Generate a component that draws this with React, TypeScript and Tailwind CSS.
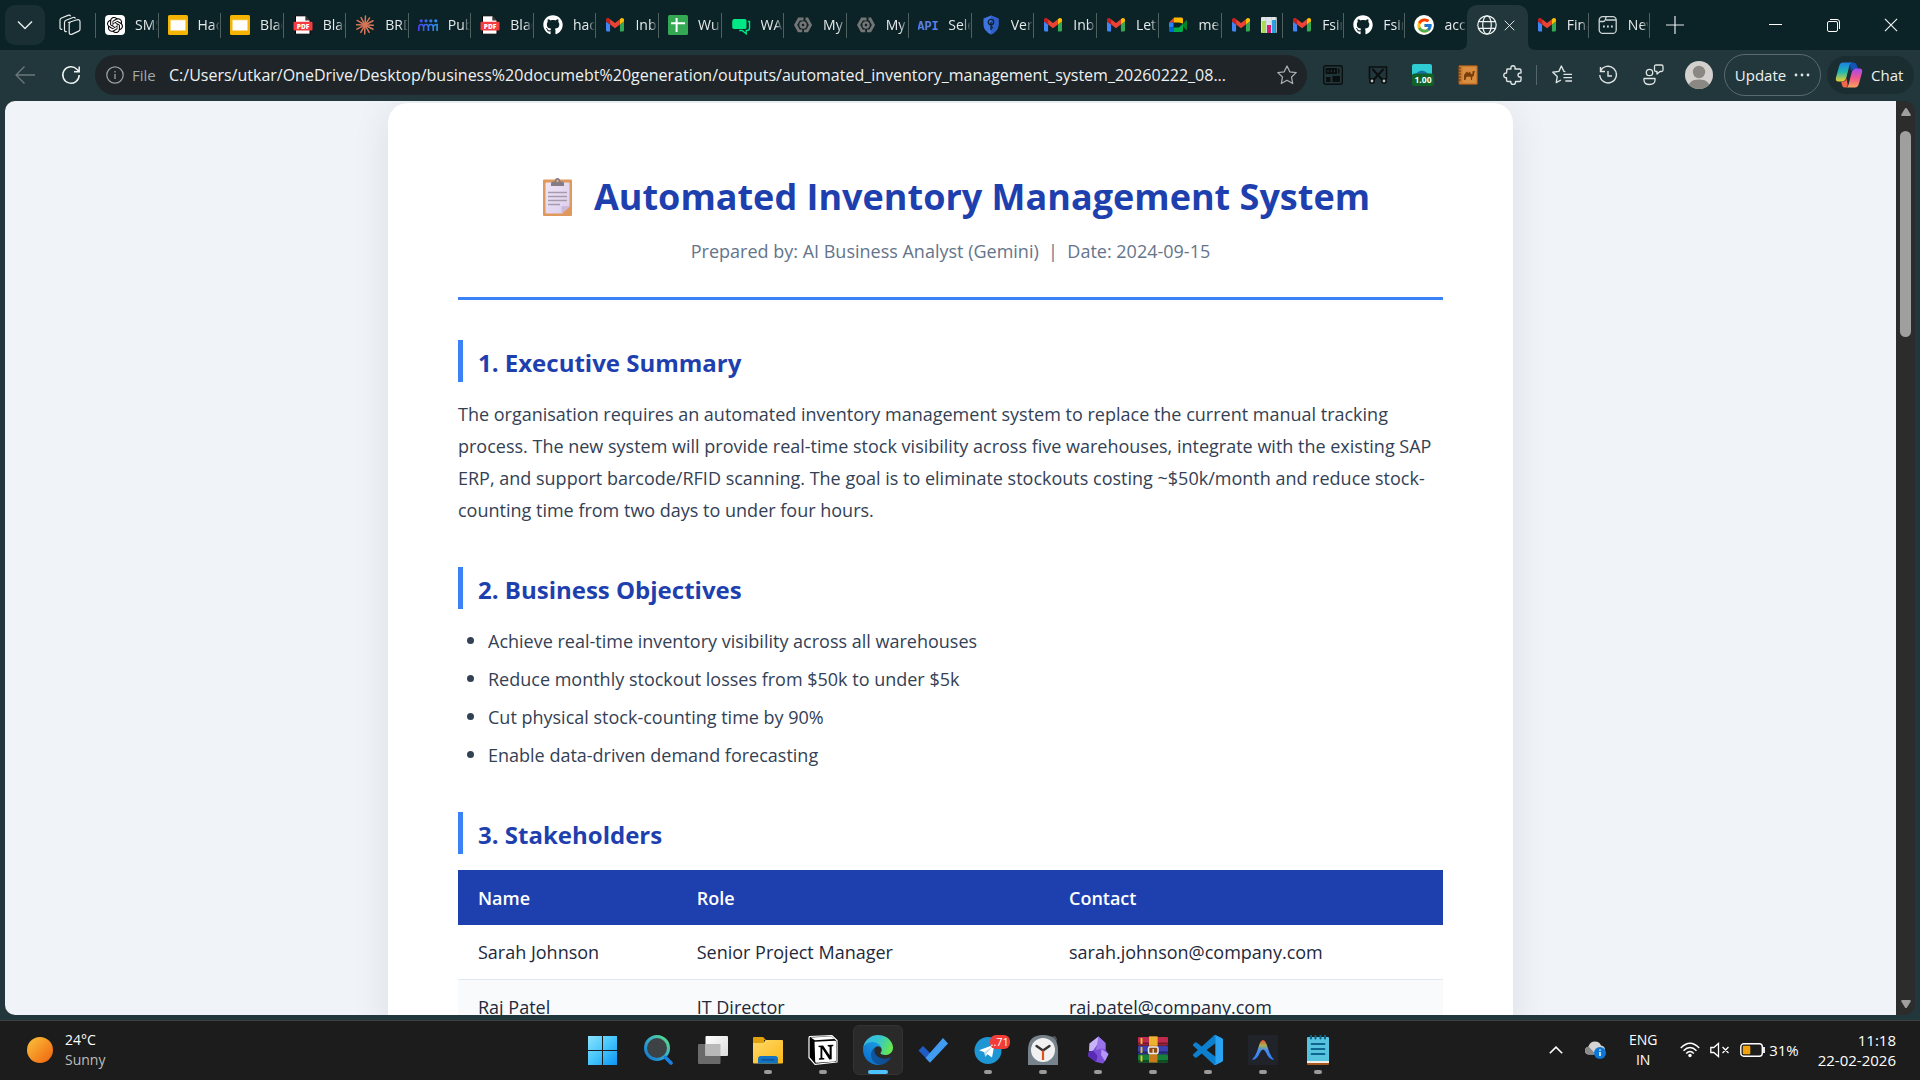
import type { ReactNode } from "react";
import { FaGithub } from "react-icons/fa";
import { FcGoogle } from "react-icons/fc";
import { SiOpenai } from "react-icons/si";

/* ---------- favicons ---------- */

const OpenAiIcon = () => (
  <span className="flex size-5 items-center justify-center rounded bg-white text-black">
    <SiOpenai size={16} />
  </span>
);

const SlidesIcon = () => (
  <svg viewBox="0 0 20 20" className="size-5">
    <rect width="20" height="20" rx="1.5" fill="#f4b400" />
    <rect x="2.5" y="5" width="15" height="10.5" fill="#fff" stroke="#f9d67a" strokeWidth="0.8" />
  </svg>
);

const PdfIcon = () => (
  <svg viewBox="0 0 20 20" className="size-5">
    <path d="M2.5 0.8h10l4.5 4.4v14h-14.5z" fill="#fff" stroke="#000" strokeWidth="1" />
    <path d="M12.3 0.8v4.6h4.7z" fill="#333" />
    <rect x="0.5" y="6.8" width="19" height="8.6" rx="1" fill="#f43b3f" />
    <text x="10" y="13.6" fontSize="6.6" fontWeight="800" textAnchor="middle" fill="#fff" fontFamily="Open Sans, sans-serif">PDF</text>
  </svg>
);

const ClaudeIcon = () => (
  <svg viewBox="0 0 20 20" className="size-5" stroke="#d97757" strokeWidth="1.5" strokeLinecap="round">
    {[3, 33, 62, 92, 118, 150, 182, 210, 243, 272, 300, 332].map((a, i) => (
      <path key={a} d={i % 2 ? "M10 9V1.6" : "M10 9V0.9"} transform={`rotate(${a} 10 10)`} />
    ))}
  </svg>
);

const PeopleRowIcon = () => (
  <svg viewBox="0 0 20 20" className="size-5" fill="none" strokeWidth="1.6">
    <defs>
      <linearGradient id="crowd" gradientUnits="userSpaceOnUse" x1="0" y1="0" x2="20" y2="0">
        <stop offset="0" stopColor="#4a45f0" />
        <stop offset="1" stopColor="#2797e8" />
      </linearGradient>
    </defs>
    <g stroke="url(#crowd)">
      <path d="M.8 16v-3.500q0-3 2.400-3t2.400 3V16M5.600 12.500q0-3 2.400-3t2.400 3V16M10.400 12.500q0-3 2.400-3t2.400 3V16M15.200 12.500q0-3 3.900-3V16" />
    </g>
    <g fill="url(#crowd)">
      <circle cx="3.200" cy="5.800" r="1.600" />
      <circle cx="8" cy="5.800" r="1.600" />
      <circle cx="12.800" cy="5.800" r="1.600" />
      <circle cx="17.800" cy="5.800" r="1.600" />
    </g>
  </svg>
);

const GithubIcon = () => <FaGithub size={20} color="#fff" />;

const GmailIcon = () => (
  <svg viewBox="52 42 88 66" className="w-[18px]">
    <path fill="#4285f4" d="M58 108h14V74L52 59v43c0 3.32 2.69 6 6 6" />
    <path fill="#34a853" d="M120 108h14c3.32 0 6-2.69 6-6V59l-20 15" />
    <path fill="#fbbc04" d="M120 48v26l20-15v-8c0-7.42-8.47-11.65-14.4-7.2" />
    <path fill="#ea4335" d="M72 74V48l24 18 24-18v26L96 92" />
    <path fill="#c5221f" d="M52 51v8l20 15V48l-5.6-4.2c-5.94-4.45-14.4-.22-14.4 7.2" />
  </svg>
);

const SheetsIcon = () => (
  <svg viewBox="0 0 20 20" className="size-5">
    <rect width="20" height="20" rx="1.5" fill="#34a853" />
    <path d="M8.6 3v14M3 8.2h14" stroke="#fff" strokeWidth="2" />
  </svg>
);

const ChatBubblesIcon = () => (
  <svg viewBox="0 0 20 20" className="size-5">
    <path d="M3 4h11q1.5 0 1.5 1.500v7q0 1.500-1.500 1.500h-11q-1.800 0-1.800-1.800v-5.400q0-2.800 1.800-2.800z" fill="#00e785" />
    <path d="M16.800 6.500h1.700v6.500q0 2.500-2.500 2.500h-.8v3.300l-4-3.300h-3" fill="none" stroke="#00e785" strokeWidth="1.400" />
  </svg>
);

const CloudHexIcon = () => (
  <svg viewBox="0 0 20 20" className="size-5" fill="none" stroke="#757575" strokeWidth="2.800">
    <path d="M10.500 4H6L2.600 10l3.200 5.800h3.400" />
    <path d="M12.500 4H14.200l3.300 6-3.300 5.800h-3.200" />
    <circle cx="10" cy="10" r="2.500" strokeWidth="2.400" />
  </svg>
);

const ApiIcon = () => (
  <svg viewBox="0 0 20 20" className="size-5">
    <text x="10" y="14.500" fontSize="12" fontWeight="700" textAnchor="middle" fill="#5a7fe0" fontFamily="Liberation Mono, monospace">API</text>
  </svg>
);

const ShieldIcon = () => (
  <svg viewBox="0 0 20 20" className="size-5">
    <path d="M10 .6 17.500 3.600v6.200q0 6-7.500 9.800Q2.500 15.800 2.500 9.800V3.600z" fill="#3f74e0" />
    <path d="M10 .6 17.500 3.600v6.200q0 6-7.500 9.800z" fill="#2f5fc8" />
    <circle cx="10" cy="7" r="2.700" fill="none" stroke="#0c2233" strokeWidth="1.300" />
    <path d="M10 7v8M10 12.500h2" stroke="#0c2233" strokeWidth="1.300" />
  </svg>
);

const MeetIcon = () => (
  <svg viewBox="0 0 20 20" className="size-5">
    <path d="M6 2.500 1 7.500h5z" fill="#ea4335" />
    <path d="M1 7.500h4.500v5H1z" fill="#2684fc" />
    <path d="M1 12.500h4.500V17H2.500Q1 17 1 15.500z" fill="#0066da" />
    <path d="M6 2.500h7.500q1.500 0 1.500 1.500v4.500l-4-1H6z" fill="#ffba00" />
    <path d="M5.500 12.500H11l4-4v7q0 1.500-1.500 1.500h-8z" fill="#00ac47" />
    <path d="m14 10 4-4.600q1-.6 1 .5v8.500q0 .9-1 .3z" fill="#00832d" />
  </svg>
);

const BarsIcon = () => (
  <svg viewBox="0 0 16 16" className="size-4">
    <rect width="16" height="16" rx="1" fill="#dfe6e8" />
    <path d="M0 5h16M0 10h16M5 0v16M10.500 0v16" stroke="#b8c5c9" strokeWidth=".5" />
    <rect x="1" y="4" width="4" height="12" fill="#a9d957" />
    <rect x="6" y="8" width="4" height="8" fill="#d81b72" />
    <rect x="11" y="3" width="4" height="13" fill="#2f9fe0" />
  </svg>
);

const GoogleIcon = () => (
  <span className="flex size-5 items-center justify-center rounded-full bg-white">
    <FcGoogle size={17} />
  </span>
);

const NewTabIcon = () => (
  <svg viewBox="0 0 20 20" className="size-5" fill="none" stroke="#cfd6d8" strokeWidth="1.300">
    <rect x="1.200" y="1.600" width="17" height="16.800" rx="3.500" />
    <path d="M1.200 6.500h4q1.500 0 2-1.500l1-3.400M8 5h10" />
    <path d="M5 11.500h1.800M9 11.500h1.800M13 11.500h1.800" strokeWidth="1.800" />
  </svg>
);

const GlobeIcon = () => (
  <svg viewBox="0 0 20 20" className="size-5 shrink-0" fill="none" stroke="#f0f3f4" strokeWidth="1.200">
    <circle cx="10" cy="10" r="9.200" />
    <ellipse cx="10" cy="10" rx="4.300" ry="9.200" />
    <path d="M1.500 6.700h17M1.500 13.300h17" />
  </svg>
);

const CloseGlyph = ({ className }: { className: string }) => (
  <svg viewBox="0 0 12 12" className={className} stroke="#f0f3f4" fill="none">
    <path d="m.8.8 10.400 10.400M11.200.8.8 11.200" />
  </svg>
);

type TabInfo = { icon: ReactNode; label: ReactNode; name: string };

const leftTabs: TabInfo[] = [
  { icon: <OpenAiIcon />, label: "SMS", name: "SMS" },
  { icon: <SlidesIcon />, label: "Hac", name: "Hac" },
  { icon: <SlidesIcon />, label: "Blac", name: "Blac" },
  { icon: <PdfIcon />, label: "Blac", name: "Blac" },
  { icon: <ClaudeIcon />, label: "BRD", name: "BRD" },
  { icon: <PeopleRowIcon />, label: "Pub", name: "Pub" },
  { icon: <PdfIcon />, label: "Blac", name: "Blac" },
  { icon: <GithubIcon />, label: "hac", name: "hac" },
  { icon: <GmailIcon />, label: "Inb", name: "Inbox" },
  { icon: <SheetsIcon />, label: "Wu", name: "Wu" },
  { icon: <ChatBubblesIcon />, label: "WA", name: "WA" },
  { icon: <CloudHexIcon />, label: "My", name: "My" },
  { icon: <CloudHexIcon />, label: "My", name: "My" },
  { icon: <ApiIcon />, label: "Sele", name: "Sele" },
  { icon: <ShieldIcon />, label: "Ver", name: "Ver" },
  { icon: <GmailIcon />, label: "Inb", name: "Inbox" },
  { icon: <GmailIcon />, label: "Let'", name: "Let's" },
  { icon: <MeetIcon />, label: "mee", name: "Meet" },
];

const midTabs: TabInfo[] = [
  { icon: <GmailIcon />, label: <BarsIcon />, name: "Mail" },
  { icon: <GmailIcon />, label: "Fsin", name: "Fsin" },
  { icon: <GithubIcon />, label: "Fsin", name: "Fsin" },
  { icon: <GoogleIcon />, label: "acc", name: "acc" },
];

const endTabs: TabInfo[] = [
  { icon: <GmailIcon />, label: "Fina", name: "Fina" },
  { icon: <NewTabIcon />, label: "New", name: "New tab" },
];

const Tab = ({ tab, last }: { tab: TabInfo; last?: boolean }) => (
  <button
    aria-label={tab.name}
    className={
      last
        ? "flex h-[25px] min-w-0 items-center gap-2.5 overflow-hidden pl-[9px]"
        : "flex h-[25px] min-w-0 items-center gap-2.5 overflow-hidden border-r border-[#50605f] pl-[9px]"
    }
  >
    <span className="flex w-5 shrink-0 items-center justify-center">{tab.icon}</span>
    <span className="min-w-0 flex-1 overflow-hidden whitespace-nowrap text-left text-sm leading-5 text-[#e6eaeb] [mask-image:linear-gradient(to_right,black_65%,transparent)]">
      {tab.label}
    </span>
  </button>
);

const TabStrip = () => (
  <header className="flex h-[50px] shrink-0 items-center bg-[#0b2226]">
    <button aria-label="Tab actions" className="ml-[5px] flex size-10 items-center justify-center rounded-[10px] bg-[#1a2f33]">
      <svg viewBox="0 0 16 10" className="w-4" fill="none" stroke="#e6eaeb" strokeWidth="1.500">
        <path d="m1 1.500 7 7 7-7" />
      </svg>
    </button>
    <button aria-label="Workspaces" className="flex h-[25px] w-[51px] items-center justify-center border-r border-[#50605f]">
      <svg viewBox="0 0 22 22" className="size-[22px]" fill="none" stroke="#e6eaeb" strokeWidth="1.200" strokeLinejoin="round">
        <path d="M9.500 8.500 18 5.800q3-.6 3 2v7.400q0 1.300-1.300 1.900l-6.500 3q-3 1-3-1.600V10q0-1 .8-1.400z" />
        <path d="M7.800 17.500q-2.300.5-2.300-1.500V8.500q0-1.500 1.500-2.200l7-2.800q2-.6 2.500 1" />
        <path d="M3.300 15.200q-2.300.5-2.300-1.500V6.200Q1 4.700 2.500 4l6.500-2.600q2-.7 2.600.8" />
      </svg>
    </button>
    <nav aria-label="Open tabs" className="flex h-full max-w-[1554px] flex-1 items-center">
      <div className="grid min-w-0 grow-[18] basis-[1126px] grid-cols-18 items-center">
        {leftTabs.map((t, i) => (
          <Tab key={i} tab={t} />
        ))}
      </div>
      <div className="grid h-full min-w-0 grow-[7] basis-[428px] grid-cols-7 items-center">
        {midTabs.map((t, i) => (
          <Tab key={i} tab={t} last={i === 3} />
        ))}
        <div className="relative flex h-full min-w-0 items-end">
          <div className="flex h-[45px] w-full items-center gap-[7px] rounded-t-[10px] bg-[#21373b] pb-[5px] pl-2.5">
            <GlobeIcon />
            <button aria-label="Close tab">
              <CloseGlyph className="size-[11px]" />
            </button>
          </div>
          <svg viewBox="0 0 8 8" className="absolute -left-2 bottom-0 size-2">
            <path d="M8 0v8H0q8 0 8-8z" fill="#21373b" />
          </svg>
          <svg viewBox="0 0 8 8" className="absolute -right-2 bottom-0 size-2">
            <path d="M0 0v8h8q-8 0-8-8z" fill="#21373b" />
          </svg>
        </div>
        {endTabs.map((t, i) => (
          <Tab key={i} tab={t} />
        ))}
      </div>
    </nav>
    <button aria-label="New tab" className="flex h-10 w-[50px] items-center justify-center">
      <svg viewBox="0 0 18 18" className="size-[18px]" stroke="#e6eaeb" strokeWidth="1.200">
        <path d="M9 0v18M0 9h18" />
      </svg>
    </button>
    <div className="ml-auto flex h-full items-center">
      <button aria-label="Minimize" className="flex h-full w-[58px] items-center justify-center">
        <svg viewBox="0 0 13 13" className="size-[13px]" stroke="#fff">
          <path d="M0 5.500h13" />
        </svg>
      </button>
      <button aria-label="Restore" className="flex h-full w-[58px] items-center justify-center">
        <svg viewBox="0 0 13 13" className="size-[13px]" fill="none" stroke="#fff">
          <rect x=".5" y="2.500" width="10" height="10" rx="1.500" />
          <path d="M3 .5h7q2.500 0 2.500 2.500v7" />
        </svg>
      </button>
      <button aria-label="Close window" className="flex h-full w-[58px] items-center justify-center">
        <CloseGlyph className="size-[14px]" />
      </button>
    </div>
  </header>
);

/* ---------- toolbar ---------- */

const ToolButton = ({ label, children }: { label: string; children: ReactNode }) => (
  <button aria-label={label} className="flex h-10 w-[45px] items-center justify-center">
    {children}
  </button>
);

const CopilotIcon = () => (
  <svg viewBox="0 0 28 26" className="w-7">
    <defs>
      <linearGradient id="cpA" x1="0" y1="0" x2="0" y2="1">
        <stop offset="0" stopColor="#1c7fe8" />
        <stop offset=".5" stopColor="#20b9b0" />
        <stop offset="1" stopColor="#f3cf2b" />
      </linearGradient>
      <linearGradient id="cpB" x1="0" y1="0" x2="0" y2="1">
        <stop offset="0" stopColor="#a04cf5" />
        <stop offset=".5" stopColor="#f0568c" />
        <stop offset="1" stopColor="#fba35a" />
      </linearGradient>
    </defs>
    <path d="M15 .5h3.500q2.500 0 3.200 2.500L23 7h-4q-2.500 0-3.200 2.600z" fill="#1453b8" />
    <path d="M8 .5h9q-2 .5-2.600 3L11.500 15q-1 4.500-5 4.500h-3Q0 19.500 1 15.500L4 4.500Q5 .5 8 .5z" fill="url(#cpA)" />
    <path d="M20 25.500h-9q2-.5 2.600-3L16.500 11q1-4.500 5-4.500h3q3.500 0 2.500 4l-3 11q-1 4-4 4z" fill="url(#cpB)" />
    <path d="M8.500 19.500q2.400-.3 3-3l1 5q.5 3.500-1.500 4H9.600q-2 0-2.600-2.500l-.9-3.500z" fill="#f4654f" />
  </svg>
);

const Toolbar = () => (
  <div className="flex h-[51px] shrink-0 items-center bg-[#21373b] pb-px">
    <button aria-label="Back" className="flex h-10 w-[50px] items-center justify-center">
      <svg viewBox="0 0 20 18" className="w-5" fill="none" stroke="#6b797b" strokeWidth="1.300">
        <path d="M20 9H1M9.500.5 1 9l8.500 8.500" />
      </svg>
    </button>
    <button aria-label="Reload" className="flex h-10 w-[45px] items-center justify-center pr-1">
      <svg viewBox="0 0 20 20" className="size-5" fill="none" stroke="#f0f3f4" strokeWidth="1.500">
        <path d="M18.200 10a8.200 8.200 0 1 1-2.200-5.600L18 6.500M18.200 1.500v5.200H13" />
      </svg>
    </button>
    <div className="flex h-10 min-w-0 flex-1 items-center rounded-full bg-[#1e2427] pl-[11px] pr-[9px]">
      <svg viewBox="0 0 18 18" className="size-[18px] shrink-0" fill="none" stroke="#9a9fa1" strokeWidth="1.300">
        <circle cx="9" cy="9" r="8.200" />
        <path d="M9 8v5M9 5v1.500" />
      </svg>
      <label htmlFor="address" className="ml-2 w-[37px] text-[15px] leading-5 text-[#a3a8a9]">
        File
      </label>
      <input
        id="address"
        className="h-8 min-w-0 flex-1 bg-transparent text-base text-[#eef1f2] outline-none"
        defaultValue="C:/Users/utkar/OneDrive/Desktop/business%20documebt%20generation/outputs/automated_inventory_management_system_20260222_08..."
      />
      <button aria-label="Add to favorites" className="flex size-[22px] items-center justify-center">
        <svg viewBox="0 0 20 20" className="size-5" fill="none" stroke="#a9aeb0" strokeWidth="1.300" strokeLinejoin="round">
          <path d="m10 1 2.800 5.800 6.400.8-4.700 4.400 1.200 6.500-5.700-3.200-5.700 3.200L5.500 12 .8 7.600l6.400-.8z" />
        </svg>
      </button>
    </div>
    <div className="ml-[3px] mr-px flex items-center">
      <ToolButton label="Picture in picture">
        <svg viewBox="0 0 20 20" className="size-5" fill="none" stroke="#0b0f10" strokeWidth="1.400">
          <rect x=".7" y=".7" width="18.600" height="18.600" rx="2" />
          <rect x="2.600" y="3" width="11.500" height="6" fill="#0b0f10" stroke="none" />
          <path d="M15.800 3.500v5" />
          <rect x="3" y="12" width="4.500" height="5" fill="#0b0f10" stroke="none" />
          <rect x="9.500" y="10.800" width="7.500" height="6.200" fill="#0b0f10" stroke="none" />
          <path d="M5 5.200v2M8.300 5.200v2M11.500 5.200v2" stroke="#2c4145" strokeWidth=".9" />
        </svg>
      </ToolButton>
      <ToolButton label="Screenshot">
        <svg viewBox="0 0 20 20" className="size-5" fill="none" stroke="#0b0f10" strokeWidth="1.600">
          <path d="M1.500 14V2h17v12" />
          <path d="M4.500 4 14.500 15M15.500 4 5.500 15" strokeWidth="2" />
          <circle cx="4" cy="16" r="2.200" fill="#b9c3c5" />
          <circle cx="16" cy="16" r="2.200" fill="#b9c3c5" />
        </svg>
      </ToolButton>
      <ToolButton label="Playback speed">
        <svg viewBox="0 0 22 22" className="size-[22px]">
          <rect x="0" y="0" width="20" height="12" rx="2" fill="#2fcbd2" />
          <path d="M3.500 10q6.500-7 13 0z" fill="#1670a8" />
          <rect x="0" y="9.500" width="22" height="12.500" rx="2.500" fill="#106228" />
          <text x="11" y="19" fontSize="8.500" fontWeight="700" textAnchor="middle" fill="#fff" fontFamily="Open Sans, sans-serif">1.00</text>
        </svg>
      </ToolButton>
      <ToolButton label="Camel notebook">
        <svg viewBox="0 0 20 20" className="size-5">
          <rect x=".8" y=".5" width="18.700" height="19" rx="1" fill="#c87a2f" stroke="#8e4f16" strokeWidth=".8" />
          <rect x="4.500" y="2" width="13.500" height="16" fill="#d98d3f" />
          <path d="M0 3h3M0 6h3M0 9h3M0 12h3M0 15h3" stroke="#5e3410" strokeWidth="1" />
          <path d="M6 15V10l1.500-2 1.500-1.500L10.500 8l1.300-1.500L13.200 9h1l.5-3 2.500.3-.8 1.200-.6 3.500-1.500.8L14 15h-1l-.3-3.200H8.500L7.500 15z" fill="#7a3e0c" />
        </svg>
      </ToolButton>
      <ToolButton label="Extensions">
        <svg viewBox="0 0 20 20" className="size-5" fill="none" stroke="#dfe4e5" strokeWidth="1.400" strokeLinejoin="round">
          <path d="M4 4h4q-.6-3.200 2-3.200T12 4h4.500q1.500 0 1.500 1.500V8q-3-.3-3 2t3 2v3q0 1.500-1.500 1.500H12.500q.2 3-2.300 3t-2.400-3H5Q3.500 16.500 3.500 15v-2.300Q.8 13 .8 10.400T3.500 8z" />
        </svg>
      </ToolButton>
    </div>
    <div className="h-5 border-l border-[#55666a]" />
    <div className="flex items-center pl-[3px]">
      <ToolButton label="Favorites">
        <svg viewBox="0 0 22 20" className="w-[21px]" fill="none" stroke="#dfe4e5" strokeWidth="1.400" strokeLinejoin="round">
          <path d="M14 7l-1.500-.3L9.800 1 7.200 6.700l-6.400.9 4.700 4.500L4.400 18.500l5-2.800M12 9.800h9M12 13.300h9M14 16.800h7" />
        </svg>
      </ToolButton>
      <ToolButton label="History">
        <svg viewBox="0 0 20 20" className="size-5" fill="none" stroke="#dfe4e5" strokeWidth="1.400">
          <path d="M2.500 2v4.500H7M2.500 6.200A8.300 8.300 0 1 1 1.800 10M10 6v5h4" />
        </svg>
      </ToolButton>
      <ToolButton label="Browser essentials">
        <svg viewBox="0 0 22 22" className="size-[22px]" fill="none" stroke="#dfe4e5" strokeWidth="1.300" strokeLinejoin="round">
          <circle cx="7.500" cy="8.500" r="3.200" />
          <path d="M2 14.500h11v1.500q0 4.500-5.500 4.500T2 16zM14 1h5.500q1.500 0 1.500 1.500V6q0 1.500-1.500 1.500H18L15 10V7.500h-1q-1.500 0-1.500-1.500V2.500Q12.500 1 14 1z" />
        </svg>
      </ToolButton>
    </div>
    <button aria-label="Profile" className="ml-2.5 size-7 overflow-hidden rounded-full bg-[#d3d0cd]">
      <svg viewBox="0 0 28 28">
        <circle cx="14" cy="11" r="6.200" fill="#8b8783" />
        <path d="M3 28q0-9.500 11-9.500T25 28z" fill="#8b8783" />
      </svg>
    </button>
    <button className="ml-[11px] flex h-[42px] w-[97px] items-center justify-center gap-2 rounded-full border border-[#586a6d] text-[15px] text-[#eef1f2]">
      Update
      <svg viewBox="0 0 16 4" className="w-4" fill="#dfe4e5">
        <circle cx="2" cy="2" r="1.400" />
        <circle cx="8" cy="2" r="1.400" />
        <circle cx="14" cy="2" r="1.400" />
      </svg>
    </button>
    <button className="ml-1.5 mr-1.5 flex h-[38px] w-[87px] items-center gap-2 rounded-full bg-[#1a2d31] pl-2 text-[15px] text-[#eef1f2]">
      <CopilotIcon />
      Chat
    </button>
  </div>
);

/* ---------- document ---------- */

const ClipboardIcon = () => (
  <svg viewBox="0 0 53 40" className="h-10 w-[53px]">
    <defs>
      <linearGradient id="sheet" x1="0" y1="0" x2="1" y2="1">
        <stop offset="0" stopColor="#efe6f7" />
        <stop offset="1" stopColor="#dccdec" />
      </linearGradient>
    </defs>
    <rect x="12" y="2.500" width="29" height="36.500" rx="1" fill="#e0995c" />
    <path d="M14.500 6.500q0-1 1-1h22q1 0 1 1V29.500L31 36.500H15.500q-1 0-1-1z" fill="url(#sheet)" />
    <path d="M38.500 29 30.500 37v-7q0-1 1-1z" fill="#c9b9dc" />
    <path d="M20 9V6.500q0-2 2-2h1.500q.5-3.500 3-3.500t3 3.500H31q2 0 2 2V9z" fill="#857b84" />
    <circle cx="26.500" cy="4" r="1.200" fill="#d9b38f" />
    <path d="M17 15.500h19M17 19.500h19M17 23.500h19M17 27.500h12" stroke="#a59bad" strokeWidth="1.500" />
  </svg>
);

const SectionTitle = ({ children }: { children: ReactNode }) => (
  <h2 className="mb-4 border-l-[5px] border-[#3b82f6] pt-1 pl-[15px] text-2xl leading-[38px] font-bold text-[#1e40af]">
    {children}
  </h2>
);

const objectives = [
  "Achieve real-time inventory visibility across all warehouses",
  "Reduce monthly stockout losses from $50k to under $5k",
  "Cut physical stock-counting time by 90%",
  "Enable data-driven demand forecasting",
];

const stakeholders = [
  ["Sarah Johnson", "Senior Project Manager", "sarah.johnson@company.com"],
  ["Raj Patel", "IT Director", "raj.patel@company.com"],
];

const DocumentPage = () => (
  <main className="flex-1 overflow-hidden rounded-bl-[10px] rounded-tl-[10px] bg-[#f0f4f8] pt-0.5">
    <article className="mx-auto max-w-[1125px] rounded-t-[20px] bg-white px-[70px] pt-[66px] shadow-[0_5px_38px_rgba(0,0,0,0.09)]">
      <div className="border-b-[3px] border-[#3b82f6] pb-7 text-center">
        <h1 className="flex items-center justify-center gap-2.5 text-4xl leading-[56px] font-bold text-[#1e40af]">
          <ClipboardIcon />
          Automated Inventory Management System
        </h1>
        <p className="mt-2 text-lg leading-9 whitespace-pre text-[#64748b]">
          {"Prepared by: AI Business Analyst (Gemini)  |  Date: 2024-09-15"}
        </p>
      </div>
      <section className="mt-10">
        <SectionTitle>1. Executive Summary</SectionTitle>
        <p className="pb-px text-lg leading-8 text-[#334155]">
          The organisation requires an automated inventory management system to replace the current manual tracking
          process. The new system will provide real-time stock visibility across five warehouses, integrate with the
          existing SAP ERP, and support barcode/RFID scanning. The goal is to eliminate stockouts costing ~$50k/month
          and reduce stock-counting time from two days to under four hours.
        </p>
      </section>
      <section className="mt-10">
        <SectionTitle>2. Business Objectives</SectionTitle>
        <ul className="flex list-disc flex-col gap-1.5 pb-px pl-[30px] text-lg leading-8 text-[#334155] marker:text-xl">
          {objectives.map((o) => (
            <li key={o}>{o}</li>
          ))}
        </ul>
      </section>
      <section className="mt-10">
        <SectionTitle>3. Stakeholders</SectionTitle>
        <table className="w-full table-fixed border-collapse text-left text-lg leading-8 text-[#1e293b]">
          <colgroup>
            <col className="w-[22.2%]" />
            <col className="w-[37.8%]" />
            <col className="w-[40%]" />
          </colgroup>
          <thead className="bg-[#1e40af] text-white">
            <tr>
              <th className="px-5 pt-3 pb-[11px] font-semibold">Name</th>
              <th className="px-5 pt-3 pb-[11px] font-semibold">Role</th>
              <th className="px-5 pt-3 pb-[11px] font-semibold">Contact</th>
            </tr>
          </thead>
          <tbody>
            {stakeholders.map((row) => (
              <tr key={row[0]} className="border-b border-[#e2e8f0] even:bg-[#f8fafc]">
                {row.map((cell) => (
                  <td key={cell} className="px-5 py-[11px]">
                    {cell}
                  </td>
                ))}
              </tr>
            ))}
          </tbody>
        </table>
      </section>
    </article>
  </main>
);

const Scrollbar = () => (
  <div className="flex w-[19px] flex-col items-center rounded-r-[10px] bg-[#2c2c2c] py-[7px]">
    <svg viewBox="0 0 10 8" className="w-2.5" fill="#9f9f9f">
      <path d="M5 0q.6 0 1 .6L9.700 6.500Q10 8 9 8H1Q0 8 .3 6.500L4 .6Q4.400 0 5 0z" />
    </svg>
    <div className="mt-[15px] h-[206px] w-[11px] rounded-full bg-[#9f9f9f]" />
    <svg viewBox="0 0 10 8" className="mt-auto w-2.5" fill="#9f9f9f">
      <path d="M5 8q.6 0 1-.6L9.700 1.500Q10 0 9 0H1Q0 0 .3 1.500L4 7.400Q4.400 8 5 8z" />
    </svg>
  </div>
);

/* ---------- taskbar ---------- */

const WindowsIcon = () => (
  <svg viewBox="0 0 30 30" className="size-[30px]">
    <defs>
      <linearGradient id="win" gradientUnits="userSpaceOnUse" x1="0" y1="0" x2="30" y2="30">
        <stop offset="0" stopColor="#8fe3ff" />
        <stop offset=".5" stopColor="#45c5fb" />
        <stop offset="1" stopColor="#0a92f5" />
      </linearGradient>
    </defs>
    <path d="M0 1h14v14H0zM15 1h14v14H15zM0 16h14v14H0zM15 16h14v14H15z" fill="url(#win)" />
  </svg>
);

const SearchIcon = () => (
  <svg viewBox="0 0 30 30" className="size-[30px]">
    <defs>
      <linearGradient id="lens" x1="1" y1="0" x2="0" y2="1">
        <stop offset="0" stopColor="#5be07c" />
        <stop offset=".4" stopColor="#3cb6c4" />
        <stop offset="1" stopColor="#0d74d6" />
      </linearGradient>
    </defs>
    <circle cx="14" cy="13" r="11.500" fill="#3d4244" stroke="url(#lens)" strokeWidth="3" />
    <path d="m22.500 22.500 5.500 5.500" stroke="#1a80e0" strokeWidth="3.600" strokeLinecap="round" />
  </svg>
);

const TaskViewIcon = () => (
  <svg viewBox="0 0 30 30" className="size-[30px]">
    <defs>
      <linearGradient id="tv" x1="0" y1="0" x2="1" y2="1">
        <stop offset="0" stopColor="#fff" />
        <stop offset="1" stopColor="#dcdcdc" />
      </linearGradient>
    </defs>
    <rect x="0" y="9" width="22.500" height="20" rx="1" fill="#6a6a6a" />
    <rect x="7.500" y="1" width="22.500" height="20" rx="1" fill="url(#tv)" />
    <rect x="7.500" y="9" width="15" height="12" fill="#b9b9b9" />
  </svg>
);

const FolderIcon = () => (
  <svg viewBox="0 0 30 30" className="size-[30px]">
    <defs>
      <linearGradient id="fold" x1="0" y1="0" x2="1" y2="1">
        <stop offset="0" stopColor="#ffd869" />
        <stop offset="1" stopColor="#fbb917" />
      </linearGradient>
    </defs>
    <path d="M0 3q0-1 1-1h9l3 3h-2v6H0z" fill="#dfa20c" />
    <path d="M0 8h10.500l2-3H29q1 0 1 1v21.500q0 1-1 1H1q-1 0-1-1z" fill="url(#fold)" />
    <path d="M5 28.500V24q0-3 3-3h14q3 0 3 3v4.500z" fill="#1374c4" />
    <path d="M9 24.800h12" stroke="#0b4a86" strokeWidth="1.200" strokeLinecap="round" />
  </svg>
);

const NotionIcon = () => (
  <svg viewBox="0 0 30 30" className="size-[30px]">
    <path d="M1.500 1.500 24 .7 29 5.500V27L7 29.300 1 22.500V3z" fill="#000" stroke="#fff" strokeWidth="1.200" strokeLinejoin="round" />
    <path d="m6.500 6.800 20.500-1.100q1 0 1 1V25.300q0 1-1 1.100L8.500 27.700q-1.300 0-1.300-1.200z" fill="#fff" />
    <path d="m2.500 2.500 21-1 3 2.500-19.500 1.200z" fill="#fff" />
    <path d="M10.500 10.800l4.600-.3 6.500 9.800v-8.600l-1.900-.4v-1.200l5.600-.3v1.200l-1.600.5v12.800l-2.400.2-7-10.700v9l2 .4v1.200l-5.400.3v-1.100l1.600-.6V12.300l-2-.4z" fill="#000" />
  </svg>
);

const EdgeIcon = () => (
  <svg viewBox="0 0 256 256" className="size-[30px]">
    <defs>
      <linearGradient id="eA" x1="0" y1="0" x2="1" y2="0">
        <stop offset="0" stopColor="#0c59a4" />
        <stop offset="1" stopColor="#114a8b" />
      </linearGradient>
      <linearGradient id="eB" x1=".8" y1=".1" x2=".2" y2="1">
        <stop offset="0" stopColor="#1b9de2" />
        <stop offset=".5" stopColor="#1383d8" />
        <stop offset="1" stopColor="#0a6cc8" />
      </linearGradient>
      <linearGradient id="eC" x1="0" y1=".2" x2="1" y2=".5">
        <stop offset="0" stopColor="#35b8ea" />
        <stop offset=".5" stopColor="#35c6cf" />
        <stop offset="1" stopColor="#66e84e" />
      </linearGradient>
    </defs>
    <path fill="url(#eA)" d="M231 190.500c-3.400 1.800-6.900 3.400-10.500 4.700a101.900 101.900 0 0 1-35.900 6.500c-47.300 0-88.500-32.600-88.500-74.300a31.500 31.500 0 0 1 16.400-27.500c-42.800 1.800-53.800 46.400-53.800 72.500 0 73.900 68.100 81.400 82.800 81.400 7.900 0 19.800-2.300 27-4.600l1.300-.4a128.300 128.300 0 0 0 66.600-52.800 4 4 0 0 0-5.400-5.500Z" />
    <path fill="url(#eB)" d="M105.700 241.400A79.200 79.200 0 0 1 83 220a80.700 80.700 0 0 1 29.500-120c3.100-1.500 8.500-4.100 15.600-4a32.400 32.400 0 0 1 25.700 13 31.900 31.900 0 0 1 6.400 18.700c0-.2 24.500-79.600-80-79.600-43.900 0-80 41.600-80 78.200a130 130 0 0 0 12.100 56 128 128 0 0 0 156.400 67.100 75.600 75.600 0 0 1-62.800-8Z" />
    <path fill="url(#eC)" d="M152.300 148.900c-.8 1-3.300 2.500-3.300 5.600 0 2.600 1.700 5.100 4.700 7.200 14.400 10 41.500 8.700 41.600 8.700a59.600 59.600 0 0 0 30.300-8.300 61.400 61.400 0 0 0 30.400-52.900c.3-22.400-8-37.300-11.300-43.900C223.500 23.900 177.700 0 128 0A128 128 0 0 0 0 126.200c.5-36.500 36.800-66 80-66 3.500 0 23.500.3 42 10 16.300 8.600 24.900 18.900 30.900 29.200 6.100 10.700 7.200 24.200 7.200 29.500 0 5.400-2.700 13.300-7.800 20Z" />
  </svg>
);

const TodoIcon = () => (
  <svg viewBox="0 0 30 30" className="size-[30px]">
    <path d="M.5 15.500 5 11l11 11-4.500 5z" fill="#1f5cc4" />
    <path d="M7.500 23 25 3l5 5.500L12 27.800z" fill="#3f9cf0" />
  </svg>
);

const TelegramIcon = () => (
  <span className="relative block size-[30px]">
    <svg viewBox="0 0 30 30" className="size-[30px]">
      <circle cx="15" cy="15.500" r="13.500" fill="#1f96d4" />
      <path d="M6 15.300 21.500 9.500 19 22.500l-4.500-3.200-2.300 2.400-.8-4.500z" fill="#fff" />
      <path d="m11.400 17.200 7.600-5.400-5.500 6.800-1.300 3.100z" fill="#b9dcf0" />
    </svg>
    <span className="absolute left-[17px] top-0 rounded-md bg-[#f23c38] px-px text-[11px] leading-[14px] text-white">..71</span>
  </span>
);

const ClockIcon = () => (
  <svg viewBox="0 0 30 30" className="size-[30px]">
    <path d="m23 2 4-1 2 3-1 4z" fill="#555" />
    <path d="M0 15Q0 0 15 0t15 15v15H0z" fill="#77838c" />
    <circle cx="15" cy="15" r="12" fill="#f1f1f1" />
    <path d="M15 15.500 8.500 11M15 15.500 21.500 11" stroke="#333" strokeWidth="2.400" strokeLinecap="round" />
    <path d="M15 15.500V25" stroke="#e2511d" strokeWidth="2.200" />
  </svg>
);

const ObsidianIcon = () => (
  <svg viewBox="0 0 30 30" className="size-[30px]">
    <path d="M15.500 1.500 22.500 8v6.500l3 4.500-3.500 7-2 2.500-7-1.500L5 21l1-5 .5-7.500z" fill="#7c4fd6" />
    <path d="M15.500 1.500 6.500 8.500 6 17l4-1.500 5-7z" fill="#c9b3f7" />
    <path d="M15.500 1.500 22.500 8v6.500l-4-1L13 15z" fill="#9a73ea" />
    <path d="M6 16 5 21l8 6 1.500-6-4-5z" fill="#5a2bb5" />
    <path d="m18.500 14 7 5-3.500 7-4-6z" fill="#b596f5" />
  </svg>
);

const WinrarIcon = () => (
  <svg viewBox="0 0 30 30" className="size-[30px]">
    <rect y="2" width="30" height="8.500" rx="1" fill="#c02a4c" />
    <rect y="11" width="30" height="8.500" rx="1" fill="#3b3fb0" />
    <rect y="19.500" width="30" height="8" rx="1" fill="#17803a" />
    <path d="M0 8.500h30M0 17.500h30M0 26h30" stroke="#000" strokeOpacity=".4" strokeWidth="2" />
    <path d="M3.500 3v6M3.500 12v6M3.500 20.500v6" stroke="#f2c81e" strokeWidth="1.800" />
    <rect x="11" y="1.500" width="8.500" height="26" fill="#c97a1c" />
    <rect x="11" y="1.500" width="8.500" height="9" fill="#eab431" />
    <rect x="10.500" y="12" width="9.500" height="6.500" rx="1.500" fill="#8a4a10" stroke="#e8e8e8" strokeWidth="1.600" />
    <path d="M15.200 14v4" stroke="#eee" strokeWidth="1.200" />
  </svg>
);

const VsCodeIcon = () => (
  <svg viewBox="0 0 100 100" className="size-[30px]">
    <path fill="#0c7fcf" d="M96.500 10.800 75.900.9a6.200 6.200 0 0 0-7.100 1.200L29.400 38 12.200 25a4.200 4.200 0 0 0-5.300.2l-5.500 5a4.200 4.200 0 0 0 0 6.200L16.300 50 1.400 63.600a4.200 4.200 0 0 0 0 6.200l5.500 5a4.200 4.200 0 0 0 5.300.2l17.200-13 39.400 36a6.200 6.200 0 0 0 7.100 1.200l20.600-10a6.300 6.300 0 0 0 3.500-5.600V16.400a6.300 6.300 0 0 0-3.500-5.600ZM75 72.700 45.100 50 75 27.300Z" />
    <path fill="#27a3f2" d="M75.900.9 96.500 10.800a6.300 6.300 0 0 1 3.500 5.600v67.200a6.300 6.300 0 0 1-3.500 5.600l-20.600 10a6.200 6.200 0 0 1-7-1.200Q75 102 75 94.500V5.500Q75-2 68.800 2.100A6.200 6.200 0 0 1 75.900.9Z" />
  </svg>
);

const ArcIcon = () => (
  <svg viewBox="0 0 30 30" className="size-[30px]">
    <defs>
      <linearGradient id="arc" x1="0" y1="1" x2="0" y2="0">
        <stop offset="0" stopColor="#2f7df6" />
        <stop offset=".5" stopColor="#4a8ff0" />
        <stop offset=".72" stopColor="#a5b04e" />
        <stop offset="1" stopColor="#f0502f" />
      </linearGradient>
    </defs>
    <rect width="30" height="30" fill="#20232a" />
    <path d="M4 24.500Q8 21 10.500 12 12.500 5 15 5t4.500 7Q22 21 26 24.500q-3.500 1-6.500-4Q17 14.500 15 14.500t-4.500 6q-3 5-6.500 4z" fill="url(#arc)" />
  </svg>
);

const NotepadIcon = () => (
  <svg viewBox="0 0 30 30" className="size-[30px]">
    <rect x="4" y="25" width="22" height="5" rx="1" fill="#a8571b" />
    <rect x="4" y="24" width="22" height="4" fill="#f2ede8" />
    <path d="M4 3q0-1 1-1h20q1 0 1 1v23H4z" fill="#57c3df" />
    <path d="M8 .5v3M12.500.5v3M17.500.5v3M22 .5v3" stroke="#0f5f80" strokeWidth="2" strokeLinecap="round" />
    <path d="M8.500 9h13M8.500 14h13M8.500 19h13" stroke="#0d6590" strokeWidth="1.800" strokeLinecap="round" />
  </svg>
);

const apps: { name: string; icon: ReactNode; state: "idle" | "running" | "active" }[] = [
  { name: "Start", icon: <WindowsIcon />, state: "idle" },
  { name: "Search", icon: <SearchIcon />, state: "idle" },
  { name: "Task view", icon: <TaskViewIcon />, state: "idle" },
  { name: "File Explorer", icon: <FolderIcon />, state: "running" },
  { name: "Notion", icon: <NotionIcon />, state: "running" },
  { name: "Edge", icon: <EdgeIcon />, state: "active" },
  { name: "To Do", icon: <TodoIcon />, state: "idle" },
  { name: "Telegram", icon: <TelegramIcon />, state: "running" },
  { name: "Clock", icon: <ClockIcon />, state: "running" },
  { name: "Obsidian", icon: <ObsidianIcon />, state: "running" },
  { name: "WinRAR", icon: <WinrarIcon />, state: "running" },
  { name: "VS Code", icon: <VsCodeIcon />, state: "running" },
  { name: "Arc", icon: <ArcIcon />, state: "running" },
  { name: "Notepad", icon: <NotepadIcon />, state: "running" },
];

const buttonStyle = {
  idle: "flex h-[50px] w-[50px] flex-col items-center justify-end pb-px",
  running: "flex h-[50px] w-[50px] flex-col items-center justify-end pb-px",
  active: "flex h-[50px] w-[50px] flex-col items-center justify-end rounded-md border border-[#333] bg-[#2a2a2a]",
};

const markStyle = {
  idle: "mt-[5px] h-1 w-2",
  running: "mt-[5px] h-1 w-2 rounded-full bg-[#9a9a9a]",
  active: "mt-[5px] h-1 w-5 rounded-full bg-[#4cc2ff]",
};

const Taskbar = () => (
  <footer className="grid h-[60px] shrink-0 grid-cols-[1fr_auto_1fr] items-center border-t border-[#3d4243] bg-[#1c1c1c] pb-0.5 text-white">
    <button className="flex items-center gap-3 justify-self-start pl-[27px] text-left">
      <span className="size-[26px] rounded-full bg-gradient-to-br from-[#f7c33b] to-[#ee5d09]" />
      <span className="flex flex-col text-sm leading-5">
        <span>24°C</span>
        <span className="text-[#bdbdbd]">Sunny</span>
      </span>
    </button>
    <nav aria-label="Taskbar" className="flex gap-[5px]">
      {apps.map((a) => (
        <button key={a.name} aria-label={a.name} className={buttonStyle[a.state]}>
          {a.icon}
          <span className={markStyle[a.state]} />
        </button>
      ))}
    </nav>
    <div className="flex items-center justify-self-end pr-6 text-[15px] leading-5">
      <button aria-label="Hidden icons">
        <svg viewBox="0 0 14 8" className="w-3.5" fill="none" stroke="#fff" strokeWidth="1.600">
          <path d="m.8 7.200 6.200-6 6.200 6" />
        </svg>
      </button>
      <button aria-label="OneDrive" className="ml-[22px]">
        <svg viewBox="0 0 22 20" className="w-[22px]">
          <path d="M4 14.500Q0 14.500 0 10.500 0 7.500 3.500 6.500 5 1.500 10 1.500q4.500 0 6 4 4 .5 4 4.500t-4 4.500z" fill="#d4d4d4" />
          <path d="M4 14.500Q0 14.500 0 10.500 0 7.500 3.500 6.500L11 14.500z" fill="#8a8a8a" />
          <circle cx="15" cy="13" r="6" fill="#0a78d4" />
          <path d="M15 12v4M15 9.500v1.300" stroke="#fff" strokeWidth="1.500" />
        </svg>
      </button>
      <button className="ml-[21px] flex w-[30px] flex-col items-center text-sm leading-5">
        <span>ENG</span>
        <span>IN</span>
      </button>
      <button className="ml-[22px] flex items-center" aria-label="Network, volume and battery 31%">
        <svg viewBox="0 0 20 16" className="w-5" fill="none" stroke="#fff" strokeWidth="1.500">
          <path d="M.8 6q9.200-9.500 18.400 0M3.500 8.800q6.500-6.500 13 0M6.200 11.500q3.800-3.800 7.600 0" />
          <circle cx="10" cy="13.500" r="1.700" fill="#fff" stroke="none" />
        </svg>
        <svg viewBox="0 0 20 16" className="ml-2.5 w-5" fill="none" stroke="#fff" strokeWidth="1.300">
          <path d="M.8 5.500h3L8.500 1.500v13L3.800 10.500h-3zM12.500 5l6 6M18.500 5l-6 6" />
        </svg>
        <svg viewBox="0 0 25 14" className="ml-2.5 w-[25px]" fill="none" stroke="#fff" strokeWidth="1.400">
          <rect x=".8" y=".8" width="21.500" height="12.400" rx="3" />
          <path d="M24 4v6" strokeWidth="1.800" />
          <rect x="2.800" y="2.800" width="7.500" height="8.400" rx="1" fill="#f0a30a" stroke="none" />
        </svg>
        <span className="ml-1">31%</span>
      </button>
      <button className="ml-[19px] flex flex-col items-end">
        <span>11:18</span>
        <span>22-02-2026</span>
      </button>
    </div>
  </footer>
);

export default function App() {
  return (
    <div className="flex h-screen flex-col overflow-hidden bg-[#21373b] [font-family:'Open_Sans',sans-serif]">
      <TabStrip />
      <Toolbar />
      <div className="mx-[5px] mb-[5px] flex min-h-0 flex-1">
        <DocumentPage />
        <Scrollbar />
      </div>
      <Taskbar />
    </div>
  );
}
